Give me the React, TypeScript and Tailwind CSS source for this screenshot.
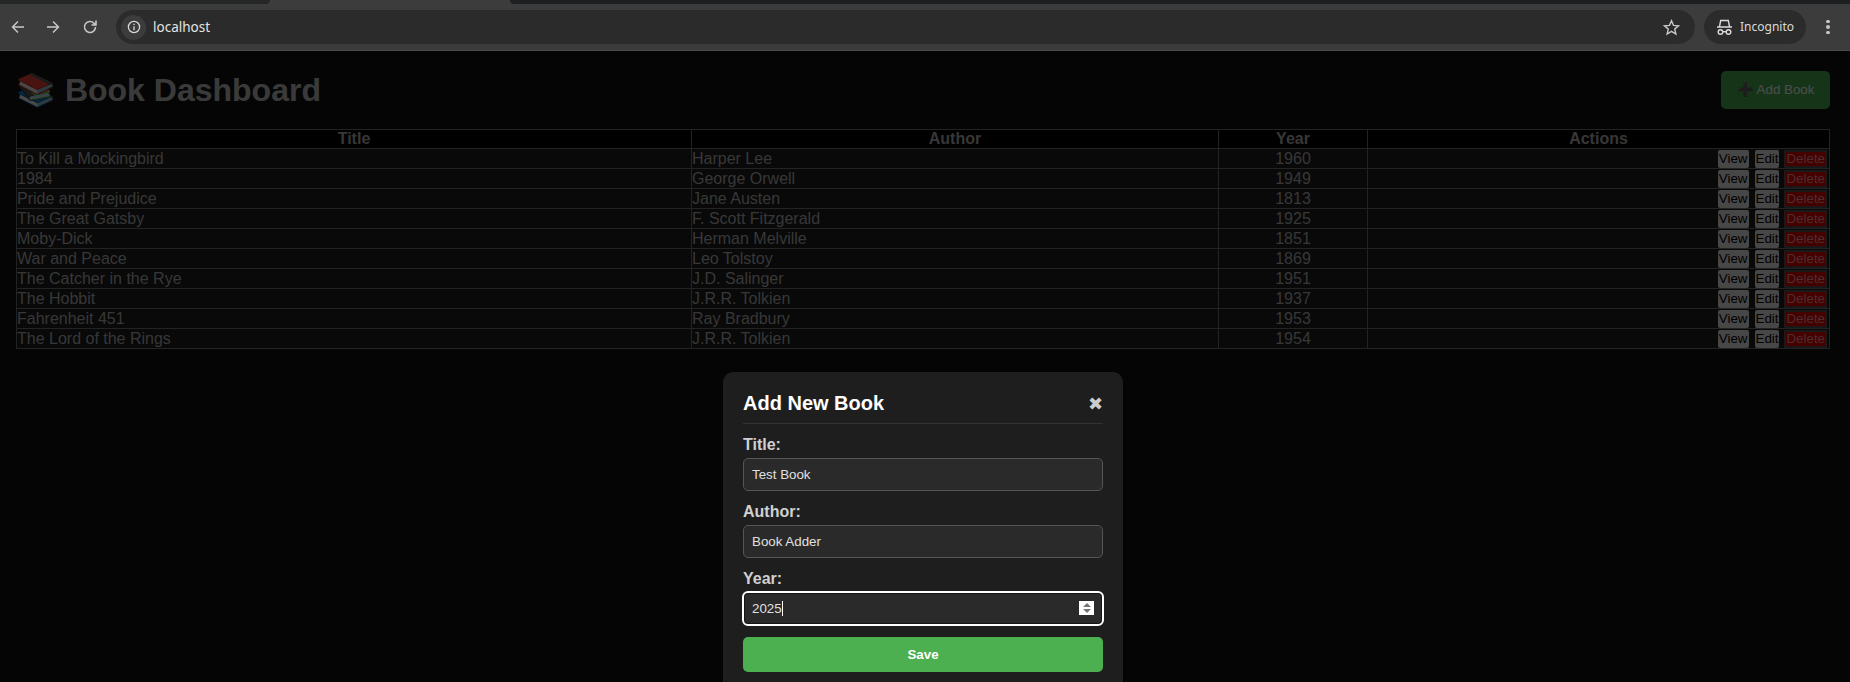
const books = [
  ["To Kill a Mockingbird", "Harper Lee", "1960"],
  ["1984", "George Orwell", "1949"],
  ["Pride and Prejudice", "Jane Austen", "1813"],
  ["The Great Gatsby", "F. Scott Fitzgerald", "1925"],
  ["Moby-Dick", "Herman Melville", "1851"],
  ["War and Peace", "Leo Tolstoy", "1869"],
  ["The Catcher in the Rye", "J.D. Salinger", "1951"],
  ["The Hobbit", "J.R.R. Tolkien", "1937"],
  ["Fahrenheit 451", "Ray Bradbury", "1953"],
  ["The Lord of the Rings", "J.R.R. Tolkien", "1954"],
];

function Toolbar() {
  return (
    <div className="h-[51px] bg-[#3c3c3c] border-b border-[#4a4a4a]">
      <div className="h-[4px] flex">
        <div className="w-[270px] bg-[#252727] rounded-br-lg" />
        <div className="w-[240px]" />
        <div className="flex-1 bg-[#1d1f20] rounded-bl-lg" />
      </div>
      <div className="h-[46px] flex items-center text-[#c7c7c7]">
        <svg width="18" height="18" viewBox="0 0 18 18" fill="none" stroke="currentColor" strokeWidth="1.500" className="ml-[9px] mr-[17px]">
          <path d="M15 9H3.500M9 3.500L3.500 9l5.500 5.500" />
        </svg>
        <svg width="18" height="18" viewBox="0 0 18 18" fill="none" stroke="currentColor" strokeWidth="1.500" className="mr-[19px]">
          <path d="M3 9h11.500M9 3.500L14.500 9 9 14.500" />
        </svg>
        <svg width="18" height="18" viewBox="0 0 18 18" fill="none" stroke="currentColor" strokeWidth="1.600" className="mr-[17px]">
          <path d="M14.500 9a5.500 5.500 0 1 1-1.600-3.900L15 7M15 2.500V7h-4.500" />
        </svg>
        <div className="flex-1 h-[34px] rounded-full bg-[#2b2b2b] flex items-center pl-[5px] pr-[15px]">
          <div className="w-[25px] h-[25px] rounded-full bg-[#3c3c3c] flex items-center justify-center mr-[7px]">
            <svg width="14" height="14" viewBox="0 0 14 14" fill="none" stroke="#d8d8d8" strokeWidth="1.300">
              <circle cx="7" cy="7" r="5.600" />
              <path d="M7 6.200v4M7 3.800v1.300" />
            </svg>
          </div>
          <span className="text-[13.5px] text-[#e3e3e3] font-['Noto_Sans',sans-serif] flex-1">localhost</span>
          <svg width="17" height="17" viewBox="0 0 17 17" fill="none" stroke="#c7c7c7" strokeWidth="1.400">
            <path d="M8.500 1.800l2 4.600 5 .4-3.800 3.300 1.200 4.900-4.400-2.600-4.400 2.600 1.200-4.900L1.500 6.800l5-.4z" />
          </svg>
        </div>
        <div className="ml-[9px] w-[102px] h-[34px] rounded-full bg-[#2b2b2b] flex items-center pl-[12px] text-[#dadada]">
          <svg width="17" height="17" viewBox="0 0 17 17" fill="none" stroke="currentColor" strokeWidth="1.400" className="mr-[7px]">
            <path d="M3.500 7.500l1.200-6h7.600l1.200 6M1 8h15" />
            <circle cx="4.500" cy="13" r="2.300" />
            <circle cx="12.500" cy="13" r="2.300" />
            <path d="M6.800 12.700h3.400" />
          </svg>
          <span className="text-[12px] font-['Noto_Sans',sans-serif]">Incognito</span>
        </div>
        <div className="w-[44px] flex flex-col items-center gap-[2px]">
          <div className="w-[3.500px] h-[3.500px] rounded-full bg-[#c7c7c7]" />
          <div className="w-[3.500px] h-[3.500px] rounded-full bg-[#c7c7c7]" />
          <div className="w-[3.500px] h-[3.500px] rounded-full bg-[#c7c7c7]" />
        </div>
      </div>
    </div>
  );
}

function Modal() {
  const inputCls =
    "w-full h-[33px] rounded-[5px] border border-[#555555] bg-[#2a2a2a] px-2 text-[13.33px] text-[#e0e0e0] outline-none";
  const labelCls = "block text-[16px] leading-[18px] font-bold text-[#d0d0d0] mb-[4px]";
  return (
    <div className="absolute left-[723px] top-[372px] w-[400px] h-[400px] rounded-[10px] bg-[#1e1e1e] px-5 pt-[20px]">
      <div className="flex items-start justify-between h-[32px] border-b border-[#333333]">
        <h2 className="text-[20px] leading-[23px] font-bold text-white">Add New Book</h2>
        <span className="text-[18px] leading-[23px] font-bold text-[#cccccc] font-['DejaVu_Sans',sans-serif]">✖</span>
      </div>
      <div className="mt-[12px] mb-[12px]">
        <label className={labelCls}>Title:</label>
        <input className={inputCls} defaultValue="Test Book" />
      </div>
      <div className="mb-[12px]">
        <label className={labelCls}>Author:</label>
        <input className={inputCls} defaultValue="Book Adder" />
      </div>
      <div className="mb-[12px]">
        <label className={labelCls}>Year:</label>
        <div className="relative h-[33px] rounded-[5px] border border-[#151515] bg-[#2a2a2a] px-2 text-[13.33px] leading-[31px] text-[#e0e0e0] outline-2 outline-offset-[-1px] outline-white shadow-[inset_0_0_0_1px_#151515]">
          <span className="border-r border-white">2025</span>
          <div className="absolute right-[8px] top-[8px] w-[15px] h-[14px] bg-white flex flex-col items-center justify-center gap-[2px]">
            <div className="w-0 h-0 border-x-[4px] border-x-transparent border-b-[4px] border-b-[#767676]" />
            <div className="w-0 h-0 border-x-[4px] border-x-transparent border-t-[4px] border-t-[#767676]" />
          </div>
        </div>
      </div>
      <button className="w-full h-[35px] rounded-[5px] bg-[#4caf50] text-white text-[13.33px] font-bold">Save</button>
    </div>
  );
}

export default function App() {
  const cell = "border border-[#777777] p-0";
  return (
    <div className="relative h-[682px] overflow-hidden bg-[#111111] font-['Liberation_Sans',Arial,sans-serif]">
      <Toolbar />
      <div className="relative h-[631px]">
        <div className="pl-4 pr-5 text-[#b8b8b8]">
          <div className="flex items-center justify-between pt-[20px] mb-[20px] h-[58px]">
            <h1 className="text-[32px] font-bold text-[#c4c4c4]">📚 Book Dashboard</h1>
            <button className="w-[109px] h-[38px] rounded-[5px] bg-[#4caf50] text-[13.33px] text-white">➕ Add Book</button>
          </div>
          <table className="w-full border-collapse text-[16px] leading-[18px]">
            <thead className="bg-black">
              <tr>
                <th className={`w-[675px] ${cell}`}>Title</th>
                <th className={`w-[527px] ${cell}`}>Author</th>
                <th className={`w-[149px] ${cell}`}>Year</th>
                <th className={cell}>Actions</th>
              </tr>
            </thead>
            <tbody className="bg-[#1e1e1e]">
              {books.map((b) => (
                <tr key={b[0]} className="h-[20px]">
                  <td className={cell}>{b[0]}</td>
                  <td className={cell}>{b[1]}</td>
                  <td className={`${cell} text-center`}>{b[2]}</td>
                  <td className={cell}>
                    <div className="flex justify-end items-center pr-[2px] text-[13.33px] leading-[15px]">
                      <button className="bg-[#efefef] text-black px-[1px] h-[18px] rounded-[2px] mr-[6px]">View</button>
                      <button className="bg-[#efefef] text-black px-[1px] h-[18px] rounded-[2px] mr-[5px]">Edit</button>
                      <button className="bg-[#e60000] text-[#ff9a9a] border-2 border-[#555555] h-[18px] leading-[14px]">Delete</button>
                    </div>
                  </td>
                </tr>
              ))}
            </tbody>
          </table>
        </div>
        <div className="absolute inset-0 bg-black/70" />
      </div>
      <Modal />
    </div>
  );
}
